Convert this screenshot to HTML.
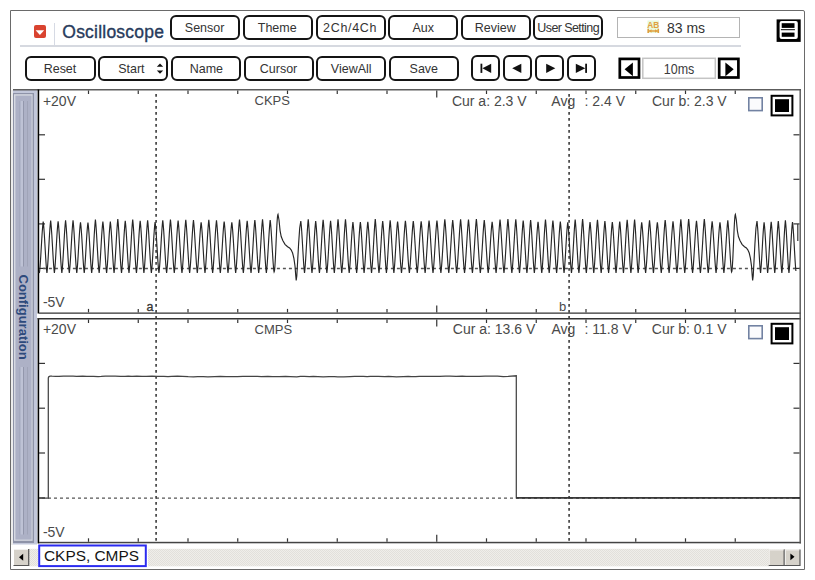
<!DOCTYPE html>
<html><head><meta charset="utf-8">
<style>
html,body{margin:0;padding:0;background:#fff;width:815px;height:580px;overflow:hidden;}
body{position:relative;font-family:"Liberation Sans",sans-serif;color:#222;}
.a{position:absolute;}
.frame{left:10px;top:10px;width:795px;height:560px;box-sizing:border-box;border:1px solid #6a6a6a;border-top-right-radius:2px;}
.btn{position:absolute;box-sizing:border-box;height:25px;border:2px solid #141414;border-radius:6px;background:#fff;font-size:13px;line-height:21px;text-align:center;color:#333;white-space:nowrap;}
.btn span{display:inline-block;transform:scaleX(.96);}
.r1{top:14.6px;height:25.4px;}
.r2{top:55.5px;height:25.5px;}
.nb{position:absolute;box-sizing:border-box;top:55.2px;width:29.2px;height:25.6px;border:2px solid #141414;border-radius:6px;background:#fff;}
.lbl{position:absolute;font-size:14px;color:#333;white-space:nowrap;line-height:14px;}
</style></head><body>
<div class="a frame"></div>

<!-- header -->
<div class="a" style="left:33.6px;top:25px;width:12.2px;height:13px;background:#d9432f;border-radius:2px;"></div>
<svg class="a" style="left:34px;top:25px" width="12" height="13"><path d="M1.6,5.2 L10.2,5.2 L5.9,9.9 Z" fill="#fff"/></svg>
<div class="a" style="left:54px;top:23px;width:1px;height:22px;background:#d6dae4;"></div>
<div class="a" style="left:62.3px;top:21.8px;font-size:17.5px;line-height:20px;color:#283b5c;-webkit-text-stroke:0.35px #283b5c;letter-spacing:0.22px;">Oscilloscope</div>
<div class="a" style="left:19.8px;top:45.1px;width:721px;height:1.8px;background:#d6d9e0;"></div>

<div class="btn r1" style="left:170px;width:70px;"><span>Sensor</span></div>
<div class="btn r1" style="left:242.5px;width:70px;"><span>Theme</span></div>
<div class="btn r1" style="left:315.5px;width:70px;letter-spacing:0.7px;"><span>2Ch/4Ch</span></div>
<div class="btn r1" style="left:388px;width:70px;"><span>Aux</span></div>
<div class="btn r1" style="left:460.5px;width:70px;"><span>Review</span></div>
<div class="btn r1" style="left:533px;width:70px;letter-spacing:-0.6px;"><span>User Setting</span></div>

<div class="a" style="left:617px;top:17px;width:123px;height:21px;box-sizing:border-box;border:1px solid #b4b4b4;"></div>
<svg class="a" style="left:0;top:0" width="815" height="50">
  <rect x="647.5" y="20.5" width="11.5" height="12.5" fill="#e9f8dc"/>
  <text x="647.2" y="27.7" font-size="9" font-family="Liberation Sans" font-weight="bold" fill="#e0a040" textLength="12" lengthAdjust="spacingAndGlyphs">AB</text>
  <path d="M648.2,28.8 V33 M658.3,28.8 V33 M648.2,31 H658.3" stroke="#e0a040" stroke-width="1.6" fill="none"/>
  <path d="M649,31 L651.5,29.3 V32.7 Z M657.5,31 L655,29.3 V32.7 Z" fill="#e0a040"/>
</svg>
<div class="a" style="left:667px;top:20px;font-size:14px;line-height:16px;color:#333;">83 ms</div>

<svg class="a" style="left:0;top:0" width="815" height="50">
  <rect x="776.6" y="19.4" width="24.1" height="22.5" fill="#000"/>
  <rect x="779.6" y="20.9" width="18.2" height="18" rx="2" fill="#fff"/>
  <rect x="781.7" y="23.2" width="12.8" height="4.7" fill="#000"/>
  <rect x="780.9" y="29.2" width="14" height="1" fill="#000"/>
  <rect x="781.7" y="32.6" width="12.8" height="4.2" fill="#000"/>
</svg>

<!-- row 2 -->
<div class="btn r2" style="left:25px;width:70.5px;"><span>Reset</span></div>
<div class="btn r2" style="left:98.4px;width:70px;text-indent:-2.4px;"><span>Start</span></div>
<svg class="a" style="left:155px;top:62px" width="10" height="14"><path d="M1.8,4.8 L5,1.6 L8.2,4.8 Z M1.8,8.6 L5,11.8 L8.2,8.6 Z" fill="#111"/></svg>
<div class="btn r2" style="left:171px;width:70px;"><span>Name</span></div>
<div class="btn r2" style="left:243.5px;width:70px;"><span>Cursor</span></div>
<div class="btn r2" style="left:316px;width:70px;"><span>ViewAll</span></div>
<div class="btn r2" style="left:388.5px;width:70px;"><span>Save</span></div>

<div class="nb" style="left:471.2px;"></div>
<div class="nb" style="left:503px;"></div>
<div class="nb" style="left:535px;"></div>
<div class="nb" style="left:566.8px;"></div>
<svg class="a" style="left:0;top:0" width="815" height="90">
  <rect x="480.5" y="63.7" width="1.8" height="9.2" fill="#111"/>
  <path d="M482.4,68.3 L491.2,63.7 L491.2,72.9 Z" fill="#111"/>
  <path d="M512.2,68.3 L521.3,63.7 L521.3,72.9 Z" fill="#111"/>
  <path d="M555.3,68.3 L546.2,63.7 L546.2,72.9 Z" fill="#111"/>
  <path d="M585.3,68.3 L575.8,63.7 L575.8,72.9 Z" fill="#111"/>
  <rect x="585.2" y="63.7" width="1.8" height="9.2" fill="#111"/>
  <!-- time nav -->
  <rect x="619.8" y="58.9" width="19.2" height="18.6" fill="#fff" stroke="#000" stroke-width="2.7"/>
  <path d="M624.6,69.3 L632.9,62.4 L632.9,76.2 Z" fill="#000"/>
  <rect x="642.8" y="58.3" width="72.5" height="20" fill="#fff" stroke="#c4c4c4" stroke-width="1.5"/>
  <rect x="719.2" y="58.9" width="19.2" height="18.6" fill="#fff" stroke="#000" stroke-width="2.7"/>
  <path d="M733.7,69.3 L725.4,62.4 L725.4,76.2 Z" fill="#000"/>
  <text x="663.8" y="73.5" font-size="14" font-family="Liberation Sans" fill="#3c3c3c" textLength="30.5" lengthAdjust="spacingAndGlyphs">10ms</text>
</svg>

<!-- scope -->
<svg class="a" style="left:0;top:0" width="815" height="580">
  <defs>
    <pattern id="dots" width="2" height="2" patternUnits="userSpaceOnUse">
      <rect width="2" height="2" fill="#efeeea"/>
      <rect width="1" height="1" fill="#e2e0db"/>
      <rect x="1" y="1" width="1" height="1" fill="#e2e0db"/>
    </pattern>
  </defs>
  <!-- sidebar -->
  <rect x="11" y="90" width="2" height="455" fill="#ececec"/>
  <rect x="13" y="90" width="24" height="454.5" fill="#c2c7da"/>
  <rect x="13" y="93" width="21" height="450" fill="#8e93a8"/>
  <rect x="14" y="94.2" width="18.6" height="446.6" fill="#d6d9e2"/>
  <rect x="15.4" y="95.6" width="16.2" height="444" fill="#adb1c6"/>
  <g>
    <rect x="19.5" y="101" width="1" height="165.5" fill="#9ea3b8"/>
    <rect x="20.5" y="101" width="2.5" height="165.5" fill="#bec2d5"/>
    <rect x="23" y="101" width="1" height="165.5" fill="#9397ac"/>
    <rect x="27" y="101" width="1" height="165.5" fill="#a0a4b8"/>
    <rect x="19.5" y="367" width="1" height="167.5" fill="#9ea3b8"/>
    <rect x="20.5" y="367" width="2.5" height="167.5" fill="#bec2d5"/>
    <rect x="23" y="367" width="1" height="167.5" fill="#9397ac"/>
    <rect x="27" y="367" width="1" height="167.5" fill="#a0a4b8"/>
  </g>
  <text transform="translate(19,274.5) rotate(90)" font-size="13" font-weight="bold" font-family="Liberation Sans" fill="#2d4a7c">Configuration</text>

  <!-- panel backgrounds & borders -->
  <rect x="13" y="89" width="788" height="1.5" fill="#5c5c5c"/>
  <rect x="37.6" y="89.5" width="1.6" height="224" fill="#000"/>
  <rect x="37.6" y="318" width="1.6" height="225.5" fill="#000"/>
  <rect x="39" y="312.4" width="762" height="1.5" fill="#555"/>
  <rect x="37.6" y="318" width="763.4" height="1.5" fill="#333"/>
  <rect x="39" y="541.8" width="762" height="1.5" fill="#444"/>
  <rect x="799.5" y="89.5" width="1.4" height="454" fill="#555"/>

  <!-- ticks -->
  <g stroke="#333" stroke-width="1.2">
    <path d="M88.50,90.5 V94.0"/>
    <path d="M88.50,312.4 V308.9"/>
    <path d="M88.50,319.5 V323.0"/>
    <path d="M88.50,541.8 V538.3"/>
    <path d="M138.25,90.5 V94.0"/>
    <path d="M138.25,312.4 V308.9"/>
    <path d="M138.25,319.5 V323.0"/>
    <path d="M138.25,541.8 V538.3"/>
    <path d="M188.00,90.5 V94.0"/>
    <path d="M188.00,312.4 V308.9"/>
    <path d="M188.00,319.5 V323.0"/>
    <path d="M188.00,541.8 V538.3"/>
    <path d="M237.75,90.5 V94.0"/>
    <path d="M237.75,312.4 V308.9"/>
    <path d="M237.75,319.5 V323.0"/>
    <path d="M237.75,541.8 V538.3"/>
    <path d="M287.50,90.5 V94.0"/>
    <path d="M287.50,312.4 V308.9"/>
    <path d="M287.50,319.5 V323.0"/>
    <path d="M287.50,541.8 V538.3"/>
    <path d="M337.25,90.5 V94.0"/>
    <path d="M337.25,312.4 V308.9"/>
    <path d="M337.25,319.5 V323.0"/>
    <path d="M337.25,541.8 V538.3"/>
    <path d="M387.00,90.5 V94.0"/>
    <path d="M387.00,312.4 V308.9"/>
    <path d="M387.00,319.5 V323.0"/>
    <path d="M387.00,541.8 V538.3"/>
    <path d="M436.75,90.5 V97.5"/>
    <path d="M436.75,312.4 V305.4"/>
    <path d="M436.75,319.5 V326.5"/>
    <path d="M436.75,541.8 V534.8"/>
    <path d="M486.50,90.5 V94.0"/>
    <path d="M486.50,312.4 V308.9"/>
    <path d="M486.50,319.5 V323.0"/>
    <path d="M486.50,541.8 V538.3"/>
    <path d="M536.25,90.5 V94.0"/>
    <path d="M536.25,312.4 V308.9"/>
    <path d="M536.25,319.5 V323.0"/>
    <path d="M536.25,541.8 V538.3"/>
    <path d="M586.00,90.5 V94.0"/>
    <path d="M586.00,312.4 V308.9"/>
    <path d="M586.00,319.5 V323.0"/>
    <path d="M586.00,541.8 V538.3"/>
    <path d="M635.75,90.5 V94.0"/>
    <path d="M635.75,312.4 V308.9"/>
    <path d="M635.75,319.5 V323.0"/>
    <path d="M635.75,541.8 V538.3"/>
    <path d="M685.50,90.5 V94.0"/>
    <path d="M685.50,312.4 V308.9"/>
    <path d="M685.50,319.5 V323.0"/>
    <path d="M685.50,541.8 V538.3"/>
    <path d="M735.25,90.5 V94.0"/>
    <path d="M735.25,312.4 V308.9"/>
    <path d="M735.25,319.5 V323.0"/>
    <path d="M735.25,541.8 V538.3"/>
    <path d="M39,134.8 H45"/>
    <path d="M799.5,134.8 H793.5"/>
    <path d="M39,179.3 H45"/>
    <path d="M799.5,179.3 H793.5"/>
    <path d="M39,223.9 H45"/>
    <path d="M799.5,223.9 H793.5"/>
    <path d="M39,268.4 H45"/>
    <path d="M799.5,268.4 H793.5"/>
    <path d="M39,363.4 H45"/>
    <path d="M799.5,363.4 H793.5"/>
    <path d="M39,408.2 H45"/>
    <path d="M799.5,408.2 H793.5"/>
    <path d="M39,453.0 H45"/>
    <path d="M799.5,453.0 H793.5"/>
    <path d="M39,497.9 H45"/>
    <path d="M799.5,497.9 H793.5"/>
  </g>

  <path d="M797.8,223.9 V241" stroke="#333" stroke-width="1.2"/>
  <!-- dashed refs -->
  <path d="M42.9,268.5 H800" stroke="#555" stroke-width="1.3" stroke-dasharray="3,3"/>
  <path d="M42,498.1 H800" stroke="#555" stroke-width="1.3" stroke-dasharray="3,3"/>
  <!-- cursors -->
  <path d="M156.1,94 V543" stroke="#3a3a3a" stroke-width="1.6" stroke-dasharray="2.8,3.2"/>
  <path d="M569.1,94 V543" stroke="#3a3a3a" stroke-width="1.6" stroke-dasharray="2.8,3.2"/>

  <!-- waves -->
  <path d="M39.00,271.59 L39.40,273.00 L39.64,270.99 L39.88,268.53 L40.11,265.67 L40.35,262.42 L40.59,258.86 L40.83,255.05 L41.06,251.07 L41.30,247.00 L41.54,242.93 L41.78,238.99 L42.01,235.28 L42.25,231.83 L42.49,228.69 L42.73,225.92 L42.96,223.58 L43.20,221.67 L43.43,223.58 L43.67,225.92 L43.90,228.69 L44.13,231.83 L44.37,235.28 L44.60,238.99 L44.83,242.93 L45.07,247.00 L45.30,251.07 L45.53,255.05 L45.76,258.86 L46.00,262.42 L46.23,265.67 L46.46,268.53 L46.70,270.99 L46.93,273.00 L47.16,270.99 L47.40,268.53 L47.63,265.67 L47.86,262.42 L48.10,258.86 L48.33,255.05 L48.56,251.07 L48.80,247.00 L49.03,242.93 L49.26,238.92 L49.49,235.05 L49.73,231.43 L49.96,228.12 L50.19,225.19 L50.43,222.67 L50.66,220.60 L50.89,222.67 L51.13,225.19 L51.36,228.12 L51.59,231.43 L51.83,235.05 L52.06,238.92 L52.29,242.93 L52.53,247.00 L52.76,251.07 L52.99,255.05 L53.22,258.86 L53.46,262.42 L53.69,265.67 L53.92,268.53 L54.16,270.99 L54.39,273.00 L54.62,270.99 L54.86,268.53 L55.09,265.67 L55.32,262.42 L55.56,258.86 L55.79,255.05 L56.02,251.07 L56.26,247.00 L56.49,242.93 L56.72,238.96 L56.95,235.18 L57.19,231.65 L57.42,228.44 L57.65,225.61 L57.89,223.19 L58.12,221.21 L58.35,223.19 L58.59,225.61 L58.82,228.44 L59.05,231.65 L59.29,235.18 L59.52,238.96 L59.75,242.93 L59.98,247.00 L60.22,251.07 L60.45,255.05 L60.68,258.86 L60.92,262.42 L61.15,265.67 L61.38,268.53 L61.62,270.99 L61.85,273.00 L62.08,270.99 L62.32,268.53 L62.55,265.67 L62.78,262.42 L63.02,258.86 L63.25,255.05 L63.48,251.07 L63.72,247.00 L63.95,242.93 L64.18,238.91 L64.41,235.00 L64.65,231.35 L64.88,228.01 L65.11,225.04 L65.35,222.49 L65.58,220.39 L65.81,222.49 L66.05,225.04 L66.28,228.01 L66.51,231.35 L66.75,235.00 L66.98,238.91 L67.21,242.93 L67.44,247.00 L67.68,251.07 L67.91,255.05 L68.14,258.86 L68.38,262.42 L68.61,265.67 L68.84,268.53 L69.08,270.99 L69.31,273.00 L69.54,270.99 L69.78,268.53 L70.01,265.67 L70.24,262.42 L70.48,258.86 L70.71,255.05 L70.94,251.07 L71.17,247.00 L71.41,242.93 L71.64,238.90 L71.87,234.99 L72.11,231.32 L72.34,227.97 L72.57,224.99 L72.81,222.43 L73.04,220.31 L73.27,222.43 L73.51,224.99 L73.74,227.97 L73.97,231.32 L74.21,234.99 L74.44,238.90 L74.67,242.93 L74.91,247.00 L75.14,251.07 L75.37,255.05 L75.60,258.86 L75.84,262.42 L76.07,265.67 L76.30,268.53 L76.54,270.99 L76.77,273.00 L77.00,270.99 L77.24,268.53 L77.47,265.67 L77.70,262.42 L77.94,258.86 L78.17,255.05 L78.40,251.07 L78.63,247.00 L78.87,242.93 L79.10,239.03 L79.33,235.42 L79.57,232.05 L79.80,229.01 L80.03,226.34 L80.27,224.08 L80.50,222.27 L80.73,224.08 L80.97,226.34 L81.20,229.01 L81.43,232.05 L81.67,235.42 L81.90,239.03 L82.13,242.93 L82.37,247.00 L82.60,251.07 L82.83,255.05 L83.06,258.86 L83.30,262.42 L83.53,265.67 L83.76,268.53 L84.00,270.99 L84.23,273.00 L84.46,270.99 L84.70,268.53 L84.93,265.67 L85.16,262.42 L85.40,258.86 L85.63,255.05 L85.86,251.07 L86.09,247.00 L86.33,242.93 L86.56,239.04 L86.79,235.46 L87.03,232.12 L87.26,229.11 L87.49,226.47 L87.73,224.24 L87.96,222.45 L88.19,224.24 L88.43,226.47 L88.66,229.11 L88.89,232.12 L89.13,235.46 L89.36,239.04 L89.59,242.93 L89.83,247.00 L90.06,251.07 L90.29,255.05 L90.52,258.86 L90.76,262.42 L90.99,265.67 L91.22,268.53 L91.46,270.99 L91.69,273.00 L91.92,270.99 L92.16,268.53 L92.39,265.67 L92.62,262.42 L92.86,258.86 L93.09,255.05 L93.32,251.07 L93.56,247.00 L93.79,242.93 L94.02,238.86 L94.25,234.82 L94.49,231.04 L94.72,227.57 L94.95,224.48 L95.19,221.80 L95.42,219.57 L95.65,221.80 L95.89,224.48 L96.12,227.57 L96.35,231.04 L96.59,234.82 L96.82,238.86 L97.05,242.93 L97.28,247.00 L97.52,251.07 L97.75,255.05 L97.98,258.86 L98.22,262.42 L98.45,265.67 L98.68,268.53 L98.92,270.99 L99.15,273.00 L99.38,270.99 L99.62,268.53 L99.85,265.67 L100.08,262.42 L100.32,258.86 L100.55,255.05 L100.78,251.07 L101.02,247.00 L101.25,242.93 L101.48,238.98 L101.71,235.27 L101.95,231.80 L102.18,228.65 L102.41,225.87 L102.65,223.51 L102.88,221.59 L103.11,223.51 L103.35,225.87 L103.58,228.65 L103.81,231.80 L104.05,235.27 L104.28,238.98 L104.51,242.93 L104.74,247.00 L104.98,251.07 L105.21,255.05 L105.44,258.86 L105.68,262.42 L105.91,265.67 L106.14,268.53 L106.38,270.99 L106.61,273.00 L106.84,270.99 L107.08,268.53 L107.31,265.67 L107.54,262.42 L107.78,258.86 L108.01,255.05 L108.24,251.07 L108.47,247.00 L108.71,242.93 L108.94,238.99 L109.17,235.29 L109.41,231.83 L109.64,228.70 L109.87,225.93 L110.11,223.59 L110.34,221.68 L110.57,223.59 L110.81,225.93 L111.04,228.70 L111.27,231.83 L111.51,235.29 L111.74,238.99 L111.97,242.93 L112.20,247.00 L112.44,251.07 L112.67,255.05 L112.90,258.86 L113.14,262.42 L113.37,265.67 L113.60,268.53 L113.84,270.99 L114.07,273.00 L114.30,270.99 L114.54,268.53 L114.77,265.67 L115.00,262.42 L115.24,258.86 L115.47,255.05 L115.70,251.07 L115.94,247.00 L116.17,242.93 L116.40,238.82 L116.63,234.70 L116.87,230.83 L117.10,227.28 L117.33,224.10 L117.57,221.34 L117.80,219.02 L118.03,221.34 L118.27,224.10 L118.50,227.28 L118.73,230.83 L118.97,234.70 L119.20,238.82 L119.43,242.93 L119.66,247.00 L119.90,251.07 L120.13,255.05 L120.36,258.86 L120.60,262.42 L120.83,265.67 L121.06,268.53 L121.30,270.99 L121.53,273.00 L121.76,270.99 L122.00,268.53 L122.23,265.67 L122.46,262.42 L122.70,258.86 L122.93,255.05 L123.16,251.07 L123.39,247.00 L123.63,242.93 L123.86,238.94 L124.09,235.11 L124.33,231.52 L124.56,228.26 L124.79,225.37 L125.03,222.89 L125.26,220.85 L125.49,222.89 L125.73,225.37 L125.96,228.26 L126.19,231.52 L126.43,235.11 L126.66,238.94 L126.89,242.93 L127.12,247.00 L127.36,251.07 L127.59,255.05 L127.82,258.86 L128.06,262.42 L128.29,265.67 L128.52,268.53 L128.76,270.99 L128.99,273.00 L129.22,270.99 L129.46,268.53 L129.69,265.67 L129.92,262.42 L130.16,258.86 L130.39,255.05 L130.62,251.07 L130.86,247.00 L131.09,242.93 L131.32,238.86 L131.55,234.83 L131.79,231.04 L132.02,227.58 L132.25,224.48 L132.49,221.81 L132.72,219.57 L132.95,221.81 L133.19,224.48 L133.42,227.58 L133.65,231.04 L133.89,234.83 L134.12,238.86 L134.35,242.93 L134.58,247.00 L134.82,251.07 L135.05,255.05 L135.28,258.86 L135.52,262.42 L135.75,265.67 L135.98,268.53 L136.22,270.99 L136.45,273.00 L136.68,270.99 L136.92,268.53 L137.15,265.67 L137.38,262.42 L137.62,258.86 L137.85,255.05 L138.08,251.07 L138.31,247.00 L138.55,242.93 L138.78,238.94 L139.01,235.10 L139.25,231.51 L139.48,228.25 L139.71,225.35 L139.95,222.87 L140.18,220.83 L140.41,222.87 L140.65,225.35 L140.88,228.25 L141.11,231.51 L141.35,235.10 L141.58,238.94 L141.81,242.93 L142.05,247.00 L142.28,251.07 L142.51,255.05 L142.74,258.86 L142.98,262.42 L143.21,265.67 L143.44,268.53 L143.68,270.99 L143.91,273.00 L144.14,270.99 L144.38,268.53 L144.61,265.67 L144.84,262.42 L145.08,258.86 L145.31,255.05 L145.54,251.07 L145.77,247.00 L146.01,242.93 L146.24,238.90 L146.47,234.98 L146.71,231.30 L146.94,227.94 L147.17,224.96 L147.41,222.39 L147.64,220.26 L147.87,222.39 L148.11,224.96 L148.34,227.94 L148.57,231.30 L148.81,234.98 L149.04,238.90 L149.27,242.93 L149.50,247.00 L149.74,251.07 L149.97,255.05 L150.20,258.86 L150.44,262.42 L150.67,265.67 L150.90,268.53 L151.14,270.99 L151.37,273.00 L151.60,270.99 L151.84,268.53 L152.07,265.67 L152.30,262.42 L152.54,258.86 L152.77,255.05 L153.00,251.07 L153.24,247.00 L153.47,242.93 L153.70,239.01 L153.93,235.35 L154.17,231.94 L154.40,228.85 L154.63,226.13 L154.87,223.83 L155.10,221.97 L155.34,223.83 L155.58,226.13 L155.82,228.85 L156.06,231.94 L156.30,235.35 L156.54,239.01 L156.78,242.93 L157.02,247.00 L157.26,251.07 L157.50,255.05 L157.74,258.86 L157.98,262.42 L158.22,265.67 L158.46,268.53 L158.70,270.99 L158.94,273.00 L159.18,270.99 L159.42,268.53 L159.66,265.67 L159.90,262.42 L160.14,258.86 L160.38,255.05 L160.62,251.07 L160.86,247.00 L161.09,242.93 L161.33,238.90 L161.57,234.98 L161.81,231.31 L162.05,227.95 L162.29,224.97 L162.53,222.40 L162.77,220.28 L163.01,222.40 L163.25,224.97 L163.49,227.95 L163.73,231.31 L163.97,234.98 L164.21,238.90 L164.45,242.93 L164.69,247.00 L164.93,251.07 L165.17,255.05 L165.41,258.86 L165.65,262.42 L165.89,265.67 L166.13,268.53 L166.37,270.99 L166.61,273.00 L166.85,270.99 L167.09,268.53 L167.33,265.67 L167.57,262.42 L167.81,258.86 L168.05,255.05 L168.29,251.07 L168.53,247.00 L168.77,242.93 L169.01,238.85 L169.25,234.80 L169.49,231.00 L169.73,227.52 L169.97,224.41 L170.21,221.71 L170.45,219.46 L170.69,221.71 L170.93,224.41 L171.17,227.52 L171.41,231.00 L171.65,234.80 L171.89,238.85 L172.13,242.93 L172.37,247.00 L172.60,251.07 L172.84,255.05 L173.08,258.86 L173.32,262.42 L173.56,265.67 L173.80,268.53 L174.04,270.99 L174.28,273.00 L174.52,270.99 L174.76,268.53 L175.00,265.67 L175.24,262.42 L175.48,258.86 L175.72,255.05 L175.96,251.07 L176.20,247.00 L176.44,242.93 L176.68,238.93 L176.92,235.06 L177.16,231.45 L177.40,228.16 L177.64,225.24 L177.88,222.73 L178.12,220.67 L178.36,222.73 L178.60,225.24 L178.84,228.16 L179.08,231.45 L179.32,235.06 L179.56,238.93 L179.80,242.93 L180.04,247.00 L180.28,251.07 L180.52,255.05 L180.76,258.86 L181.00,262.42 L181.24,265.67 L181.48,268.53 L181.72,270.99 L181.96,273.00 L182.20,270.99 L182.44,268.53 L182.68,265.67 L182.92,262.42 L183.16,258.86 L183.40,255.05 L183.64,251.07 L183.88,247.00 L184.11,242.93 L184.35,238.88 L184.59,234.90 L184.83,231.17 L185.07,227.75 L185.31,224.71 L185.55,222.09 L185.79,219.91 L186.03,222.09 L186.27,224.71 L186.51,227.75 L186.75,231.17 L186.99,234.90 L187.23,238.88 L187.47,242.93 L187.71,247.00 L187.95,251.07 L188.19,255.05 L188.43,258.86 L188.67,262.42 L188.91,265.67 L189.15,268.53 L189.39,270.99 L189.63,273.00 L189.87,270.99 L190.11,268.53 L190.35,265.67 L190.59,262.42 L190.83,258.86 L191.07,255.05 L191.31,251.07 L191.55,247.00 L191.79,242.93 L192.03,238.89 L192.27,234.95 L192.51,231.26 L192.75,227.88 L192.99,224.88 L193.23,222.30 L193.47,220.15 L193.71,222.30 L193.95,224.88 L194.19,227.88 L194.43,231.26 L194.67,234.95 L194.91,238.89 L195.15,242.93 L195.38,247.00 L195.62,251.07 L195.86,255.05 L196.10,258.86 L196.34,262.42 L196.58,265.67 L196.82,268.53 L197.06,270.99 L197.30,273.00 L197.54,270.99 L197.78,268.53 L198.02,265.67 L198.26,262.42 L198.50,258.86 L198.74,255.05 L198.98,251.07 L199.22,247.00 L199.46,242.93 L199.70,239.03 L199.94,235.42 L200.18,232.06 L200.42,229.01 L200.66,226.34 L200.90,224.09 L201.14,222.28 L201.38,224.09 L201.62,226.34 L201.86,229.01 L202.10,232.06 L202.34,235.42 L202.58,239.03 L202.82,242.93 L203.06,247.00 L203.30,251.07 L203.54,255.05 L203.78,258.86 L204.02,262.42 L204.26,265.67 L204.50,268.53 L204.74,270.99 L204.98,273.00 L205.22,270.99 L205.46,268.53 L205.70,265.67 L205.94,262.42 L206.18,258.86 L206.42,255.05 L206.66,251.07 L206.89,247.00 L207.13,242.93 L207.37,238.88 L207.61,234.88 L207.85,231.14 L208.09,227.72 L208.33,224.67 L208.57,222.04 L208.81,219.85 L209.05,222.04 L209.29,224.67 L209.53,227.72 L209.77,231.14 L210.01,234.88 L210.25,238.88 L210.49,242.93 L210.73,247.00 L210.97,251.07 L211.21,255.05 L211.45,258.86 L211.69,262.42 L211.93,265.67 L212.17,268.53 L212.41,270.99 L212.65,273.00 L212.89,270.99 L213.13,268.53 L213.37,265.67 L213.61,262.42 L213.85,258.86 L214.09,255.05 L214.33,251.07 L214.57,247.00 L214.81,242.93 L215.05,238.91 L215.29,235.01 L215.53,231.36 L215.77,228.03 L216.01,225.07 L216.25,222.53 L216.49,220.43 L216.73,222.53 L216.97,225.07 L217.21,228.03 L217.45,231.36 L217.69,235.01 L217.93,238.91 L218.17,242.93 L218.40,247.00 L218.64,251.07 L218.88,255.05 L219.12,258.86 L219.36,262.42 L219.60,265.67 L219.84,268.53 L220.08,270.99 L220.32,273.00 L220.56,270.99 L220.80,268.53 L221.04,265.67 L221.28,262.42 L221.52,258.86 L221.76,255.05 L222.00,251.07 L222.24,247.00 L222.48,242.93 L222.72,238.98 L222.96,235.23 L223.20,231.74 L223.44,228.57 L223.68,225.77 L223.92,223.39 L224.16,221.45 L224.40,223.39 L224.64,225.77 L224.88,228.57 L225.12,231.74 L225.36,235.23 L225.60,238.98 L225.84,242.93 L226.08,247.00 L226.32,251.07 L226.56,255.05 L226.80,258.86 L227.04,262.42 L227.28,265.67 L227.52,268.53 L227.76,270.99 L228.00,273.00 L228.24,270.99 L228.48,268.53 L228.72,265.67 L228.96,262.42 L229.20,258.86 L229.44,255.05 L229.68,251.07 L229.91,247.00 L230.15,242.93 L230.39,239.03 L230.63,235.44 L230.87,232.10 L231.11,229.07 L231.35,226.42 L231.59,224.19 L231.83,222.39 L232.07,224.19 L232.31,226.42 L232.55,229.07 L232.79,232.10 L233.03,235.44 L233.27,239.03 L233.51,242.93 L233.75,247.00 L233.99,251.07 L234.23,255.05 L234.47,258.86 L234.71,262.42 L234.95,265.67 L235.19,268.53 L235.43,270.99 L235.67,273.00 L235.91,270.99 L236.15,268.53 L236.39,265.67 L236.63,262.42 L236.87,258.86 L237.11,255.05 L237.35,251.07 L237.59,247.00 L237.83,242.93 L238.07,238.85 L238.31,234.80 L238.55,231.00 L238.79,227.52 L239.03,224.41 L239.27,221.72 L239.51,219.47 L239.75,221.72 L239.99,224.41 L240.23,227.52 L240.47,231.00 L240.71,234.80 L240.95,238.85 L241.19,242.93 L241.43,247.00 L241.66,251.07 L241.90,255.05 L242.14,258.86 L242.38,262.42 L242.62,265.67 L242.86,268.53 L243.10,270.99 L243.34,273.00 L243.58,270.99 L243.82,268.53 L244.06,265.67 L244.30,262.42 L244.54,258.86 L244.78,255.05 L245.02,251.07 L245.26,247.00 L245.50,242.93 L245.74,238.94 L245.98,235.10 L246.22,231.52 L246.46,228.25 L246.70,225.36 L246.94,222.88 L247.18,220.85 L247.42,222.88 L247.66,225.36 L247.90,228.25 L248.14,231.52 L248.38,235.10 L248.62,238.94 L248.86,242.93 L249.10,247.00 L249.34,251.07 L249.58,255.05 L249.82,258.86 L250.06,262.42 L250.30,265.67 L250.54,268.53 L250.78,270.99 L251.02,273.00 L251.26,270.99 L251.50,268.53 L251.74,265.67 L251.98,262.42 L252.22,258.86 L252.46,255.05 L252.70,251.07 L252.94,247.00 L253.17,242.93 L253.41,238.88 L253.65,234.92 L253.89,231.20 L254.13,227.79 L254.37,224.77 L254.61,222.16 L254.85,219.98 L255.09,222.16 L255.33,224.77 L255.57,227.79 L255.81,231.20 L256.05,234.92 L256.29,238.88 L256.53,242.93 L256.77,247.00 L257.01,251.07 L257.25,255.05 L257.49,258.86 L257.73,262.42 L257.97,265.67 L258.21,268.53 L258.45,270.99 L258.69,273.00 L258.93,270.99 L259.17,268.53 L259.41,265.67 L259.65,262.42 L259.89,258.86 L260.13,255.05 L260.37,251.07 L260.61,247.00 L260.85,242.93 L261.09,238.85 L261.33,234.79 L261.57,230.99 L261.81,227.50 L262.05,224.38 L262.29,221.68 L262.53,219.42 L262.77,221.68 L263.01,224.38 L263.25,227.50 L263.49,230.99 L263.73,234.79 L263.97,238.85 L264.21,242.93 L264.44,247.00 L264.68,251.07 L264.92,255.05 L265.16,258.86 L265.40,262.42 L265.64,265.67 L265.88,268.53 L266.12,270.99 L266.36,273.00 L266.60,270.99 L266.84,268.53 L267.08,265.67 L267.32,262.42 L267.56,258.86 L267.80,255.05 L268.04,251.07 L268.28,247.00 L268.52,242.93 L268.76,238.89 L269.00,234.92 L269.24,231.20 L269.48,227.80 L269.72,224.78 L269.96,222.17 L270.20,220.00 L270.44,222.17 L270.69,224.78 L270.93,227.80 L271.18,231.20 L271.42,234.92 L271.66,238.89 L271.91,242.93 L272.15,247.00 L272.39,251.07 L272.64,255.05 L272.88,258.86 L273.12,262.42 L273.37,265.67 L273.61,268.53 L273.86,270.99 L274.10,272.00 L274.34,271.45 L274.59,269.81 L274.83,267.15 L275.08,263.56 L275.32,259.20 L275.56,254.22 L275.81,248.82 L276.05,243.20 L276.29,237.58 L276.54,232.18 L276.78,227.20 L277.02,222.84 L277.27,219.25 L277.51,216.59 L277.76,214.95 L278.00,214.40 L279.00,220.00 L280.10,230.80 L281.20,236.50 L282.80,240.50 L285.00,244.30 L287.60,246.70 L289.60,248.00 L291.10,249.80 L292.60,253.00 L293.90,258.40 L295.00,266.00 L295.70,275.00 L296.20,280.50 L296.80,276.00 L297.60,262.00 L298.60,244.00 L299.70,228.00 L300.80,221.00 L300.80,221.00 L301.03,223.01 L301.27,225.47 L301.50,228.33 L301.73,231.58 L301.96,235.14 L302.20,238.95 L302.43,242.93 L302.66,247.00 L302.89,251.07 L303.13,255.05 L303.36,258.86 L303.59,262.42 L303.82,265.67 L304.06,268.53 L304.29,270.99 L304.52,273.00 L304.76,270.99 L304.99,268.53 L305.22,265.67 L305.45,262.42 L305.69,258.86 L305.92,255.05 L306.15,251.07 L306.38,247.00 L306.62,242.93 L306.85,238.84 L307.08,234.76 L307.32,230.93 L307.55,227.42 L307.78,224.28 L308.01,221.56 L308.25,219.28 L308.48,221.56 L308.71,224.28 L308.94,227.42 L309.18,230.93 L309.41,234.76 L309.64,238.84 L309.88,242.93 L310.11,247.00 L310.34,251.07 L310.57,255.05 L310.81,258.86 L311.04,262.42 L311.27,265.67 L311.50,268.53 L311.74,270.99 L311.97,273.00 L312.20,270.99 L312.43,268.53 L312.67,265.67 L312.90,262.42 L313.13,258.86 L313.37,255.05 L313.60,251.07 L313.83,247.00 L314.06,242.93 L314.30,238.95 L314.53,235.16 L314.76,231.62 L314.99,228.40 L315.23,225.55 L315.46,223.11 L315.69,221.12 L315.93,223.11 L316.16,225.55 L316.39,228.40 L316.62,231.62 L316.86,235.16 L317.09,238.95 L317.32,242.93 L317.55,247.00 L317.79,251.07 L318.02,255.05 L318.25,258.86 L318.48,262.42 L318.72,265.67 L318.95,268.53 L319.18,270.99 L319.42,273.00 L319.65,270.99 L319.88,268.53 L320.11,265.67 L320.35,262.42 L320.58,258.86 L320.81,255.05 L321.04,251.07 L321.28,247.00 L321.51,242.93 L321.74,238.87 L321.98,234.85 L322.21,231.09 L322.44,227.64 L322.67,224.57 L322.91,221.91 L323.14,219.70 L323.37,221.91 L323.60,224.57 L323.84,227.64 L324.07,231.09 L324.30,234.85 L324.53,238.87 L324.77,242.93 L325.00,247.00 L325.23,251.07 L325.47,255.05 L325.70,258.86 L325.93,262.42 L326.16,265.67 L326.40,268.53 L326.63,270.99 L326.86,273.00 L327.09,270.99 L327.33,268.53 L327.56,265.67 L327.79,262.42 L328.03,258.86 L328.26,255.05 L328.49,251.07 L328.72,247.00 L328.96,242.93 L329.19,238.94 L329.42,235.13 L329.65,231.56 L329.89,228.30 L330.12,225.43 L330.35,222.96 L330.58,220.94 L330.82,222.96 L331.05,225.43 L331.28,228.30 L331.52,231.56 L331.75,235.13 L331.98,238.94 L332.21,242.93 L332.45,247.00 L332.68,251.07 L332.91,255.05 L333.14,258.86 L333.38,262.42 L333.61,265.67 L333.84,268.53 L334.07,270.99 L334.31,273.00 L334.54,270.99 L334.77,268.53 L335.01,265.67 L335.24,262.42 L335.47,258.86 L335.70,255.05 L335.94,251.07 L336.17,247.00 L336.40,242.93 L336.63,238.84 L336.87,234.75 L337.10,230.91 L337.33,227.39 L337.57,224.25 L337.80,221.52 L338.03,219.23 L338.26,221.52 L338.50,224.25 L338.73,227.39 L338.96,230.91 L339.19,234.75 L339.43,238.84 L339.66,242.93 L339.89,247.00 L340.12,251.07 L340.36,255.05 L340.59,258.86 L340.82,262.42 L341.06,265.67 L341.29,268.53 L341.52,270.99 L341.75,273.00 L341.99,270.99 L342.22,268.53 L342.45,265.67 L342.68,262.42 L342.92,258.86 L343.15,255.05 L343.38,251.07 L343.62,247.00 L343.85,242.93 L344.08,238.85 L344.31,234.79 L344.55,230.99 L344.78,227.50 L345.01,224.38 L345.24,221.68 L345.48,219.42 L345.71,221.68 L345.94,224.38 L346.18,227.50 L346.41,230.99 L346.64,234.79 L346.87,238.85 L347.11,242.93 L347.34,247.00 L347.57,251.07 L347.80,255.05 L348.04,258.86 L348.27,262.42 L348.50,265.67 L348.73,268.53 L348.97,270.99 L349.20,273.00 L349.43,270.99 L349.67,268.53 L349.90,265.67 L350.13,262.42 L350.36,258.86 L350.60,255.05 L350.83,251.07 L351.06,247.00 L351.29,242.93 L351.53,239.02 L351.76,235.39 L351.99,232.01 L352.23,228.95 L352.46,226.26 L352.69,223.99 L352.92,222.16 L353.16,223.99 L353.39,226.26 L353.62,228.95 L353.85,232.01 L354.09,235.39 L354.32,239.02 L354.55,242.93 L354.78,247.00 L355.02,251.07 L355.25,255.05 L355.48,258.86 L355.72,262.42 L355.95,265.67 L356.18,268.53 L356.41,270.99 L356.65,273.00 L356.88,270.99 L357.11,268.53 L357.34,265.67 L357.58,262.42 L357.81,258.86 L358.04,255.05 L358.28,251.07 L358.51,247.00 L358.74,242.93 L358.97,239.01 L359.21,235.36 L359.44,231.96 L359.67,228.88 L359.90,226.17 L360.14,223.88 L360.37,222.02 L360.60,223.88 L360.83,226.17 L361.07,228.88 L361.30,231.96 L361.53,235.36 L361.77,239.01 L362.00,242.93 L362.23,247.00 L362.46,251.07 L362.70,255.05 L362.93,258.86 L363.16,262.42 L363.39,265.67 L363.63,268.53 L363.86,270.99 L364.09,273.00 L364.33,270.99 L364.56,268.53 L364.79,265.67 L365.02,262.42 L365.26,258.86 L365.49,255.05 L365.72,251.07 L365.95,247.00 L366.19,242.93 L366.42,238.99 L366.65,235.30 L366.88,231.85 L367.12,228.73 L367.35,225.97 L367.58,223.64 L367.82,221.74 L368.05,223.64 L368.28,225.97 L368.51,228.73 L368.75,231.85 L368.98,235.30 L369.21,238.99 L369.44,242.93 L369.68,247.00 L369.91,251.07 L370.14,255.05 L370.38,258.86 L370.61,262.42 L370.84,265.67 L371.07,268.53 L371.31,270.99 L371.54,273.00 L371.77,270.99 L372.00,268.53 L372.24,265.67 L372.47,262.42 L372.70,258.86 L372.93,255.05 L373.17,251.07 L373.40,247.00 L373.63,242.93 L373.87,238.83 L374.10,234.73 L374.33,230.87 L374.56,227.34 L374.80,224.17 L375.03,221.43 L375.26,219.12 L375.49,221.43 L375.73,224.17 L375.96,227.34 L376.19,230.87 L376.43,234.73 L376.66,238.83 L376.89,242.93 L377.12,247.00 L377.36,251.07 L377.59,255.05 L377.82,258.86 L378.05,262.42 L378.29,265.67 L378.52,268.53 L378.75,270.99 L378.98,273.00 L379.22,270.99 L379.45,268.53 L379.68,265.67 L379.92,262.42 L380.15,258.86 L380.38,255.05 L380.61,251.07 L380.85,247.00 L381.08,242.93 L381.31,238.95 L381.54,235.13 L381.78,231.57 L382.01,228.32 L382.24,225.45 L382.48,222.99 L382.71,220.97 L382.94,222.99 L383.17,225.45 L383.41,228.32 L383.64,231.57 L383.87,235.13 L384.10,238.95 L384.34,242.93 L384.57,247.00 L384.80,251.07 L385.03,255.05 L385.27,258.86 L385.50,262.42 L385.73,265.67 L385.97,268.53 L386.20,270.99 L386.43,273.00 L386.66,270.99 L386.90,268.53 L387.13,265.67 L387.36,262.42 L387.59,258.86 L387.83,255.05 L388.06,251.07 L388.29,247.00 L388.53,242.93 L388.76,238.90 L388.99,234.99 L389.22,231.32 L389.46,227.97 L389.69,224.99 L389.92,222.43 L390.15,220.31 L390.39,222.43 L390.62,224.99 L390.85,227.97 L391.08,231.32 L391.32,234.99 L391.55,238.90 L391.78,242.93 L392.02,247.00 L392.25,251.07 L392.48,255.05 L392.71,258.86 L392.95,262.42 L393.18,265.67 L393.41,268.53 L393.64,270.99 L393.88,273.00 L394.11,270.99 L394.34,268.53 L394.58,265.67 L394.81,262.42 L395.04,258.86 L395.27,255.05 L395.51,251.07 L395.74,247.00 L395.97,242.93 L396.20,238.98 L396.44,235.23 L396.67,231.74 L396.90,228.57 L397.13,225.77 L397.37,223.39 L397.60,221.45 L397.84,223.39 L398.09,225.77 L398.33,228.57 L398.58,231.74 L398.82,235.23 L399.06,238.98 L399.31,242.93 L399.55,247.00 L399.79,251.07 L400.04,255.05 L400.28,258.86 L400.52,262.42 L400.77,265.67 L401.01,268.53 L401.26,270.99 L401.50,273.00 L401.74,270.99 L401.99,268.53 L402.23,265.67 L402.48,262.42 L402.72,258.86 L402.96,255.05 L403.21,251.07 L403.45,247.00 L403.69,242.93 L403.94,238.93 L404.18,235.08 L404.42,231.47 L404.67,228.19 L404.91,225.28 L405.16,222.78 L405.40,220.72 L405.65,222.78 L405.89,225.28 L406.14,228.19 L406.39,231.47 L406.63,235.08 L406.88,238.93 L407.12,242.93 L407.37,247.00 L407.62,251.07 L407.86,255.05 L408.11,258.86 L408.36,262.42 L408.60,265.67 L408.85,268.53 L409.10,270.99 L409.34,273.00 L409.59,270.99 L409.84,268.53 L410.08,265.67 L410.33,262.42 L410.57,258.86 L410.82,255.05 L411.07,251.07 L411.31,247.00 L411.56,242.93 L411.81,238.96 L412.05,235.17 L412.30,231.63 L412.55,228.41 L412.79,225.57 L413.04,223.14 L413.29,221.15 L413.53,223.14 L413.78,225.57 L414.02,228.41 L414.27,231.63 L414.52,235.17 L414.76,238.96 L415.01,242.93 L415.26,247.00 L415.50,251.07 L415.75,255.05 L416.00,258.86 L416.24,262.42 L416.49,265.67 L416.74,268.53 L416.98,270.99 L417.23,273.00 L417.47,270.99 L417.72,268.53 L417.97,265.67 L418.21,262.42 L418.46,258.86 L418.71,255.05 L418.95,251.07 L419.20,247.00 L419.45,242.93 L419.69,238.96 L419.94,235.20 L420.19,231.68 L420.43,228.48 L420.68,225.65 L420.92,223.24 L421.17,221.27 L421.42,223.24 L421.66,225.65 L421.91,228.48 L422.16,231.68 L422.40,235.20 L422.65,238.96 L422.90,242.93 L423.14,247.00 L423.39,251.07 L423.64,255.05 L423.88,258.86 L424.13,262.42 L424.37,265.67 L424.62,268.53 L424.87,270.99 L425.11,273.00 L425.36,270.99 L425.61,268.53 L425.85,265.67 L426.10,262.42 L426.35,258.86 L426.59,255.05 L426.84,251.07 L427.09,247.00 L427.33,242.93 L427.58,238.91 L427.82,235.02 L428.07,231.37 L428.32,228.04 L428.56,225.09 L428.81,222.55 L429.06,220.45 L429.30,222.55 L429.55,225.09 L429.80,228.04 L430.04,231.37 L430.29,235.02 L430.54,238.91 L430.78,242.93 L431.03,247.00 L431.27,251.07 L431.52,255.05 L431.77,258.86 L432.01,262.42 L432.26,265.67 L432.51,268.53 L432.75,270.99 L433.00,273.00 L433.25,270.99 L433.49,268.53 L433.74,265.67 L433.99,262.42 L434.23,258.86 L434.48,255.05 L434.72,251.07 L434.97,247.00 L435.22,242.93 L435.46,238.91 L435.71,235.02 L435.96,231.37 L436.20,228.04 L436.45,225.09 L436.70,222.55 L436.94,220.46 L437.19,222.55 L437.44,225.09 L437.68,228.04 L437.93,231.37 L438.17,235.02 L438.42,238.91 L438.67,242.93 L438.91,247.00 L439.16,251.07 L439.41,255.05 L439.65,258.86 L439.90,262.42 L440.15,265.67 L440.39,268.53 L440.64,270.99 L440.89,273.00 L441.13,270.99 L441.38,268.53 L441.62,265.67 L441.87,262.42 L442.12,258.86 L442.36,255.05 L442.61,251.07 L442.86,247.00 L443.10,242.93 L443.35,238.84 L443.60,234.77 L443.84,230.95 L444.09,227.45 L444.34,224.32 L444.58,221.61 L444.83,219.34 L445.07,221.61 L445.32,224.32 L445.57,227.45 L445.81,230.95 L446.06,234.77 L446.31,238.84 L446.55,242.93 L446.80,247.00 L447.05,251.07 L447.29,255.05 L447.54,258.86 L447.79,262.42 L448.03,265.67 L448.28,268.53 L448.52,270.99 L448.77,273.00 L449.02,270.99 L449.26,268.53 L449.51,265.67 L449.76,262.42 L450.00,258.86 L450.25,255.05 L450.50,251.07 L450.74,247.00 L450.99,242.93 L451.24,238.89 L451.48,234.94 L451.73,231.24 L451.97,227.86 L452.22,224.86 L452.47,222.26 L452.71,220.11 L452.96,222.26 L453.21,224.86 L453.45,227.86 L453.70,231.24 L453.95,234.94 L454.19,238.89 L454.44,242.93 L454.69,247.00 L454.93,251.07 L455.18,255.05 L455.42,258.86 L455.67,262.42 L455.92,265.67 L456.16,268.53 L456.41,270.99 L456.66,273.00 L456.90,270.99 L457.15,268.53 L457.40,265.67 L457.64,262.42 L457.89,258.86 L458.14,255.05 L458.38,251.07 L458.63,247.00 L458.88,242.93 L459.12,238.84 L459.37,234.75 L459.61,230.92 L459.86,227.40 L460.11,224.26 L460.35,221.53 L460.60,219.25 L460.85,221.53 L461.09,224.26 L461.34,227.40 L461.59,230.92 L461.83,234.75 L462.08,238.84 L462.32,242.93 L462.57,247.00 L462.82,251.07 L463.06,255.05 L463.31,258.86 L463.56,262.42 L463.80,265.67 L464.05,268.53 L464.30,270.99 L464.54,273.00 L464.79,270.99 L465.04,268.53 L465.28,265.67 L465.53,262.42 L465.77,258.86 L466.02,255.05 L466.27,251.07 L466.51,247.00 L466.76,242.93 L467.01,238.85 L467.25,234.81 L467.50,231.02 L467.75,227.54 L467.99,224.44 L468.24,221.75 L468.49,219.50 L468.73,221.75 L468.98,224.44 L469.22,227.54 L469.47,231.02 L469.72,234.81 L469.96,238.85 L470.21,242.93 L470.46,247.00 L470.70,251.07 L470.95,255.05 L471.20,258.86 L471.44,262.42 L471.69,265.67 L471.94,268.53 L472.18,270.99 L472.43,273.00 L472.67,270.99 L472.92,268.53 L473.17,265.67 L473.41,262.42 L473.66,258.86 L473.91,255.05 L474.15,251.07 L474.40,247.00 L474.65,242.93 L474.89,238.82 L475.14,234.71 L475.39,230.84 L475.63,227.29 L475.88,224.11 L476.12,221.35 L476.37,219.03 L476.62,221.35 L476.86,224.11 L477.11,227.29 L477.36,230.84 L477.60,234.71 L477.85,238.82 L478.10,242.93 L478.34,247.00 L478.59,251.07 L478.84,255.05 L479.08,258.86 L479.33,262.42 L479.57,265.67 L479.82,268.53 L480.07,270.99 L480.31,273.00 L480.56,270.99 L480.81,268.53 L481.05,265.67 L481.30,262.42 L481.55,258.86 L481.79,255.05 L482.04,251.07 L482.29,247.00 L482.53,242.93 L482.78,238.89 L483.02,234.95 L483.27,231.26 L483.52,227.88 L483.76,224.88 L484.01,222.30 L484.26,220.15 L484.50,222.30 L484.75,224.88 L485.00,227.88 L485.24,231.26 L485.49,234.95 L485.74,238.89 L485.98,242.93 L486.23,247.00 L486.47,251.07 L486.72,255.05 L486.97,258.86 L487.21,262.42 L487.46,265.67 L487.71,268.53 L487.95,270.99 L488.20,273.00 L488.45,270.99 L488.69,268.53 L488.94,265.67 L489.19,262.42 L489.43,258.86 L489.68,255.05 L489.92,251.07 L490.17,247.00 L490.42,242.93 L490.66,239.01 L490.91,235.34 L491.16,231.93 L491.40,228.83 L491.65,226.10 L491.90,223.80 L492.14,221.93 L492.39,223.80 L492.64,226.10 L492.88,228.83 L493.13,231.93 L493.37,235.34 L493.62,239.01 L493.87,242.93 L494.11,247.00 L494.36,251.07 L494.61,255.05 L494.85,258.86 L495.10,262.42 L495.35,265.67 L495.59,268.53 L495.84,270.99 L496.09,273.00 L496.33,270.99 L496.58,268.53 L496.82,265.67 L497.07,262.42 L497.32,258.86 L497.56,255.05 L497.81,251.07 L498.06,247.00 L498.30,242.93 L498.55,238.85 L498.80,234.81 L499.04,231.01 L499.29,227.53 L499.54,224.43 L499.78,221.74 L500.03,219.49 L500.27,221.74 L500.52,224.43 L500.77,227.53 L501.01,231.01 L501.26,234.81 L501.51,238.85 L501.75,242.93 L502.00,247.00 L502.25,251.07 L502.49,255.05 L502.74,258.86 L502.99,262.42 L503.23,265.67 L503.48,268.53 L503.72,270.99 L503.97,273.00 L504.22,270.99 L504.46,268.53 L504.71,265.67 L504.96,262.42 L505.20,258.86 L505.45,255.05 L505.70,251.07 L505.94,247.00 L506.19,242.93 L506.44,238.83 L506.68,234.73 L506.93,230.87 L507.17,227.34 L507.42,224.18 L507.67,221.43 L507.91,219.12 L508.16,221.43 L508.41,224.18 L508.65,227.34 L508.90,230.87 L509.15,234.73 L509.39,238.83 L509.64,242.93 L509.89,247.00 L510.13,251.07 L510.38,255.05 L510.62,258.86 L510.87,262.42 L511.12,265.67 L511.36,268.53 L511.61,270.99 L511.86,273.00 L512.10,270.99 L512.35,268.53 L512.60,265.67 L512.84,262.42 L513.09,258.86 L513.34,255.05 L513.58,251.07 L513.83,247.00 L514.07,242.93 L514.32,238.84 L514.57,234.77 L514.81,230.95 L515.06,227.45 L515.31,224.32 L515.55,221.61 L515.80,219.33 L516.03,221.61 L516.26,224.32 L516.49,227.45 L516.72,230.95 L516.96,234.77 L517.19,238.84 L517.42,242.93 L517.65,247.00 L517.88,251.07 L518.11,255.05 L518.34,258.86 L518.58,262.42 L518.81,265.67 L519.04,268.53 L519.27,270.99 L519.50,273.00 L519.73,270.99 L519.96,268.53 L520.19,265.67 L520.42,262.42 L520.66,258.86 L520.89,255.05 L521.12,251.07 L521.35,247.00 L521.58,242.93 L521.81,238.92 L522.04,235.03 L522.28,231.39 L522.51,228.07 L522.74,225.13 L522.97,222.60 L523.20,220.51 L523.43,222.60 L523.66,225.13 L523.90,228.07 L524.13,231.39 L524.36,235.03 L524.59,238.92 L524.82,242.93 L525.06,247.00 L525.29,251.07 L525.52,255.05 L525.75,258.86 L525.99,262.42 L526.22,265.67 L526.45,268.53 L526.68,270.99 L526.91,273.00 L527.15,270.99 L527.38,268.53 L527.61,265.67 L527.84,262.42 L528.07,258.86 L528.31,255.05 L528.54,251.07 L528.77,247.00 L529.00,242.93 L529.23,238.89 L529.47,234.92 L529.70,231.20 L529.93,227.80 L530.16,224.78 L530.39,222.17 L530.63,220.00 L530.86,222.17 L531.09,224.78 L531.32,227.80 L531.56,231.20 L531.79,234.92 L532.02,238.89 L532.25,242.93 L532.48,247.00 L532.72,251.07 L532.95,255.05 L533.18,258.86 L533.41,262.42 L533.64,265.67 L533.88,268.53 L534.11,270.99 L534.34,273.00 L534.57,270.99 L534.80,268.53 L535.04,265.67 L535.27,262.42 L535.50,258.86 L535.73,255.05 L535.96,251.07 L536.20,247.00 L536.43,242.93 L536.66,239.00 L536.89,235.30 L537.12,231.86 L537.36,228.74 L537.59,225.99 L537.82,223.65 L538.05,221.76 L538.29,223.65 L538.52,225.99 L538.75,228.74 L538.98,231.86 L539.21,235.30 L539.45,239.00 L539.68,242.93 L539.91,247.00 L540.14,251.07 L540.37,255.05 L540.61,258.86 L540.84,262.42 L541.07,265.67 L541.30,268.53 L541.53,270.99 L541.77,273.00 L542.00,270.99 L542.23,268.53 L542.46,265.67 L542.69,262.42 L542.93,258.86 L543.16,255.05 L543.39,251.07 L543.62,247.00 L543.86,242.93 L544.09,238.86 L544.32,234.83 L544.55,231.05 L544.78,227.58 L545.02,224.50 L545.25,221.82 L545.48,219.59 L545.71,221.82 L545.94,224.50 L546.18,227.58 L546.41,231.05 L546.64,234.83 L546.87,238.86 L547.10,242.93 L547.34,247.00 L547.57,251.07 L547.80,255.05 L548.03,258.86 L548.27,262.42 L548.50,265.67 L548.73,268.53 L548.96,270.99 L549.19,273.00 L549.43,270.99 L549.66,268.53 L549.89,265.67 L550.12,262.42 L550.35,258.86 L550.59,255.05 L550.82,251.07 L551.05,247.00 L551.28,242.93 L551.51,238.92 L551.75,235.03 L551.98,231.39 L552.21,228.06 L552.44,225.12 L552.67,222.58 L552.91,220.49 L553.14,222.58 L553.37,225.12 L553.60,228.06 L553.84,231.39 L554.07,235.03 L554.30,238.92 L554.53,242.93 L554.76,247.00 L555.00,251.07 L555.23,255.05 L555.46,258.86 L555.69,262.42 L555.92,265.67 L556.16,268.53 L556.39,270.99 L556.62,273.00 L556.85,270.99 L557.08,268.53 L557.32,265.67 L557.55,262.42 L557.78,258.86 L558.01,255.05 L558.24,251.07 L558.48,247.00 L558.71,242.93 L558.94,238.98 L559.17,235.25 L559.41,231.77 L559.64,228.60 L559.87,225.81 L560.10,223.44 L560.33,221.50 L560.57,223.44 L560.80,225.81 L561.03,228.60 L561.26,231.77 L561.49,235.25 L561.73,238.98 L561.96,242.93 L562.19,247.00 L562.42,251.07 L562.65,255.05 L562.89,258.86 L563.12,262.42 L563.35,265.67 L563.58,268.53 L563.81,270.99 L564.05,273.00 L564.28,270.99 L564.51,268.53 L564.74,265.67 L564.97,262.42 L565.21,258.86 L565.44,255.05 L565.67,251.07 L565.90,247.00 L566.14,242.93 L566.37,239.03 L566.60,235.42 L566.83,232.06 L567.06,229.01 L567.30,226.34 L567.53,224.09 L567.76,222.28 L567.99,224.09 L568.22,226.34 L568.46,229.01 L568.69,232.06 L568.92,235.42 L569.15,239.03 L569.38,242.93 L569.62,247.00 L569.85,251.07 L570.08,255.05 L570.31,258.86 L570.55,262.42 L570.78,265.67 L571.01,268.53 L571.24,270.99 L571.47,273.00 L571.71,270.99 L571.94,268.53 L572.17,265.67 L572.40,262.42 L572.63,258.86 L572.87,255.05 L573.10,251.07 L573.33,247.00 L573.56,242.93 L573.79,238.85 L574.03,234.81 L574.26,231.02 L574.49,227.54 L574.72,224.44 L574.95,221.76 L575.19,219.51 L575.42,221.76 L575.65,224.44 L575.88,227.54 L576.12,231.02 L576.35,234.81 L576.58,238.85 L576.81,242.93 L577.04,247.00 L577.28,251.07 L577.51,255.05 L577.74,258.86 L577.97,262.42 L578.20,265.67 L578.44,268.53 L578.67,270.99 L578.90,273.00 L579.13,270.99 L579.36,268.53 L579.60,265.67 L579.83,262.42 L580.06,258.86 L580.29,255.05 L580.52,251.07 L580.76,247.00 L580.99,242.93 L581.22,238.82 L581.45,234.71 L581.69,230.84 L581.92,227.29 L582.15,224.12 L582.38,221.35 L582.61,219.04 L582.85,221.35 L583.08,224.12 L583.31,227.29 L583.54,230.84 L583.77,234.71 L584.01,238.82 L584.24,242.93 L584.47,247.00 L584.70,251.07 L584.93,255.05 L585.17,258.86 L585.40,262.42 L585.63,265.67 L585.86,268.53 L586.09,270.99 L586.33,273.00 L586.56,270.99 L586.79,268.53 L587.02,265.67 L587.26,262.42 L587.49,258.86 L587.72,255.05 L587.95,251.07 L588.18,247.00 L588.42,242.93 L588.65,239.02 L588.88,235.40 L589.11,232.02 L589.34,228.97 L589.58,226.28 L589.81,224.02 L590.04,222.19 L590.27,224.02 L590.50,226.28 L590.74,228.97 L590.97,232.02 L591.20,235.40 L591.43,239.02 L591.66,242.93 L591.90,247.00 L592.13,251.07 L592.36,255.05 L592.59,258.86 L592.83,262.42 L593.06,265.67 L593.29,268.53 L593.52,270.99 L593.75,273.00 L593.99,270.99 L594.22,268.53 L594.45,265.67 L594.68,262.42 L594.91,258.86 L595.15,255.05 L595.38,251.07 L595.61,247.00 L595.84,242.93 L596.07,238.87 L596.31,234.85 L596.54,231.09 L596.77,227.64 L597.00,224.57 L597.23,221.91 L597.47,219.70 L597.70,221.91 L597.93,224.57 L598.16,227.64 L598.39,231.09 L598.63,234.85 L598.86,238.87 L599.09,242.93 L599.32,247.00 L599.56,251.07 L599.79,255.05 L600.02,258.86 L600.25,262.42 L600.48,265.67 L600.72,268.53 L600.95,270.99 L601.18,273.00 L601.41,270.99 L601.64,268.53 L601.88,265.67 L602.11,262.42 L602.34,258.86 L602.57,255.05 L602.80,251.07 L603.04,247.00 L603.27,242.93 L603.50,238.95 L603.73,235.15 L603.97,231.60 L604.20,228.37 L604.43,225.51 L604.66,223.07 L604.89,221.06 L605.13,223.07 L605.36,225.51 L605.59,228.37 L605.82,231.60 L606.05,235.15 L606.29,238.95 L606.52,242.93 L606.75,247.00 L606.98,251.07 L607.21,255.05 L607.45,258.86 L607.68,262.42 L607.91,265.67 L608.14,268.53 L608.37,270.99 L608.61,273.00 L608.84,270.99 L609.07,268.53 L609.30,265.67 L609.54,262.42 L609.77,258.86 L610.00,255.05 L610.23,251.07 L610.46,247.00 L610.70,242.93 L610.93,239.01 L611.16,235.35 L611.39,231.94 L611.62,228.85 L611.86,226.13 L612.09,223.83 L612.32,221.97 L612.55,223.83 L612.78,226.13 L613.02,228.85 L613.25,231.94 L613.48,235.35 L613.71,239.01 L613.94,242.93 L614.18,247.00 L614.41,251.07 L614.64,255.05 L614.87,258.86 L615.11,262.42 L615.34,265.67 L615.57,268.53 L615.80,270.99 L616.03,273.00 L616.27,270.99 L616.50,268.53 L616.73,265.67 L616.96,262.42 L617.19,258.86 L617.43,255.05 L617.66,251.07 L617.89,247.00 L618.12,242.93 L618.35,238.98 L618.59,235.24 L618.82,231.75 L619.05,228.58 L619.28,225.79 L619.51,223.41 L619.75,221.47 L619.98,223.41 L620.21,225.79 L620.44,228.58 L620.67,231.75 L620.91,235.24 L621.14,238.98 L621.37,242.93 L621.60,247.00 L621.84,251.07 L622.07,255.05 L622.30,258.86 L622.53,262.42 L622.76,265.67 L623.00,268.53 L623.23,270.99 L623.46,273.00 L623.69,270.99 L623.92,268.53 L624.16,265.67 L624.39,262.42 L624.62,258.86 L624.85,255.05 L625.08,251.07 L625.32,247.00 L625.55,242.93 L625.78,238.87 L626.01,234.88 L626.25,231.13 L626.48,227.70 L626.71,224.65 L626.94,222.01 L627.17,219.81 L627.41,222.01 L627.64,224.65 L627.87,227.70 L628.10,231.13 L628.33,234.88 L628.57,238.87 L628.80,242.93 L629.03,247.00 L629.26,251.07 L629.49,255.05 L629.73,258.86 L629.96,262.42 L630.19,265.67 L630.42,268.53 L630.65,270.99 L630.89,273.00 L631.12,270.99 L631.35,268.53 L631.58,265.67 L631.82,262.42 L632.05,258.86 L632.28,255.05 L632.51,251.07 L632.74,247.00 L632.98,242.93 L633.21,238.85 L633.44,234.80 L633.67,230.99 L633.90,227.51 L634.14,224.40 L634.37,221.70 L634.60,219.45 L634.82,221.70 L635.04,224.40 L635.27,227.51 L635.49,230.99 L635.71,234.80 L635.93,238.85 L636.15,242.93 L636.38,247.00 L636.60,251.07 L636.82,255.05 L637.04,258.86 L637.26,262.42 L637.48,265.67 L637.71,268.53 L637.93,270.99 L638.15,273.00 L638.37,270.99 L638.59,268.53 L638.82,265.67 L639.04,262.42 L639.26,258.86 L639.48,255.05 L639.70,251.07 L639.93,247.00 L640.15,242.93 L640.37,239.03 L640.59,235.43 L640.81,232.08 L641.03,229.05 L641.26,226.39 L641.48,224.15 L641.70,222.35 L641.94,224.15 L642.19,226.39 L642.43,229.05 L642.68,232.08 L642.92,235.43 L643.17,239.03 L643.41,242.93 L643.66,247.00 L643.90,251.07 L644.15,255.05 L644.39,258.86 L644.64,262.42 L644.88,265.67 L645.12,268.53 L645.37,270.99 L645.61,273.00 L645.86,270.99 L646.10,268.53 L646.35,265.67 L646.59,262.42 L646.84,258.86 L647.08,255.05 L647.33,251.07 L647.57,247.00 L647.82,242.93 L648.06,238.91 L648.30,234.99 L648.55,231.33 L648.79,227.99 L649.04,225.02 L649.28,222.46 L649.53,220.35 L649.77,222.46 L650.02,225.02 L650.26,227.99 L650.51,231.33 L650.75,234.99 L650.99,238.91 L651.24,242.93 L651.48,247.00 L651.73,251.07 L651.97,255.05 L652.22,258.86 L652.46,262.42 L652.71,265.67 L652.95,268.53 L653.20,270.99 L653.44,273.00 L653.69,270.99 L653.93,268.53 L654.17,265.67 L654.42,262.42 L654.66,258.86 L654.91,255.05 L655.15,251.07 L655.40,247.00 L655.64,242.93 L655.89,239.03 L656.13,235.43 L656.38,232.08 L656.62,229.05 L656.87,226.39 L657.11,224.15 L657.35,222.34 L657.60,224.15 L657.84,226.39 L658.09,229.05 L658.33,232.08 L658.58,235.43 L658.82,239.03 L659.07,242.93 L659.31,247.00 L659.56,251.07 L659.80,255.05 L660.05,258.86 L660.29,262.42 L660.53,265.67 L660.78,268.53 L661.02,270.99 L661.27,273.00 L661.51,270.99 L661.76,268.53 L662.00,265.67 L662.25,262.42 L662.49,258.86 L662.74,255.05 L662.98,251.07 L663.23,247.00 L663.47,242.93 L663.71,238.88 L663.96,234.92 L664.20,231.20 L664.45,227.80 L664.69,224.77 L664.94,222.16 L665.18,219.99 L665.43,222.16 L665.67,224.77 L665.92,227.80 L666.16,231.20 L666.40,234.92 L666.65,238.88 L666.89,242.93 L667.14,247.00 L667.38,251.07 L667.63,255.05 L667.87,258.86 L668.12,262.42 L668.36,265.67 L668.61,268.53 L668.85,270.99 L669.10,273.00 L669.34,270.99 L669.58,268.53 L669.83,265.67 L670.07,262.42 L670.32,258.86 L670.56,255.05 L670.81,251.07 L671.05,247.00 L671.30,242.93 L671.54,238.97 L671.79,235.21 L672.03,231.70 L672.28,228.52 L672.52,225.70 L672.76,223.30 L673.01,221.34 L673.25,223.30 L673.50,225.70 L673.74,228.52 L673.99,231.70 L674.23,235.21 L674.48,238.97 L674.72,242.93 L674.97,247.00 L675.21,251.07 L675.46,255.05 L675.70,258.86 L675.94,262.42 L676.19,265.67 L676.43,268.53 L676.68,270.99 L676.92,273.00 L677.17,270.99 L677.41,268.53 L677.66,265.67 L677.90,262.42 L678.15,258.86 L678.39,255.05 L678.63,251.07 L678.88,247.00 L679.12,242.93 L679.37,238.85 L679.61,234.79 L679.86,230.98 L680.10,227.49 L680.35,224.38 L680.59,221.68 L680.84,219.42 L681.08,221.68 L681.33,224.38 L681.57,227.49 L681.81,230.98 L682.06,234.79 L682.30,238.85 L682.55,242.93 L682.79,247.00 L683.04,251.07 L683.28,255.05 L683.53,258.86 L683.77,262.42 L684.02,265.67 L684.26,268.53 L684.51,270.99 L684.75,273.00 L684.99,270.99 L685.24,268.53 L685.48,265.67 L685.73,262.42 L685.97,258.86 L686.22,255.05 L686.46,251.07 L686.71,247.00 L686.95,242.93 L687.20,238.83 L687.44,234.71 L687.69,230.85 L687.93,227.31 L688.17,224.14 L688.42,221.38 L688.66,219.07 L688.91,221.38 L689.15,224.14 L689.40,227.31 L689.64,230.85 L689.89,234.71 L690.13,238.83 L690.38,242.93 L690.62,247.00 L690.87,251.07 L691.11,255.05 L691.35,258.86 L691.60,262.42 L691.84,265.67 L692.09,268.53 L692.33,270.99 L692.58,273.00 L692.82,270.99 L693.07,268.53 L693.31,265.67 L693.56,262.42 L693.80,258.86 L694.04,255.05 L694.29,251.07 L694.53,247.00 L694.78,242.93 L695.02,238.93 L695.27,235.08 L695.51,231.48 L695.76,228.19 L696.00,225.28 L696.25,222.79 L696.49,220.73 L696.74,222.79 L696.98,225.28 L697.22,228.19 L697.47,231.48 L697.71,235.08 L697.96,238.93 L698.20,242.93 L698.45,247.00 L698.69,251.07 L698.94,255.05 L699.18,258.86 L699.43,262.42 L699.67,265.67 L699.92,268.53 L700.16,270.99 L700.40,273.00 L700.65,270.99 L700.89,268.53 L701.14,265.67 L701.38,262.42 L701.63,258.86 L701.87,255.05 L702.12,251.07 L702.36,247.00 L702.61,242.93 L702.85,238.82 L703.10,234.70 L703.34,230.83 L703.58,227.27 L703.83,224.09 L704.07,221.33 L704.32,219.01 L704.56,221.33 L704.81,224.09 L705.05,227.27 L705.30,230.83 L705.54,234.70 L705.79,238.82 L706.03,242.93 L706.27,247.00 L706.52,251.07 L706.76,255.05 L707.01,258.86 L707.25,262.42 L707.50,265.67 L707.74,268.53 L707.99,270.99 L708.23,273.00 L708.48,270.99 L708.72,268.53 L708.97,265.67 L709.21,262.42 L709.45,258.86 L709.70,255.05 L709.94,251.07 L710.19,247.00 L710.43,242.93 L710.68,238.97 L710.92,235.23 L711.17,231.73 L711.41,228.56 L711.66,225.75 L711.90,223.36 L712.15,221.42 L712.39,223.36 L712.63,225.75 L712.88,228.56 L713.12,231.73 L713.37,235.23 L713.61,238.97 L713.86,242.93 L714.10,247.00 L714.35,251.07 L714.59,255.05 L714.84,258.86 L715.08,262.42 L715.33,265.67 L715.57,268.53 L715.81,270.99 L716.06,273.00 L716.30,270.99 L716.55,268.53 L716.79,265.67 L717.04,262.42 L717.28,258.86 L717.53,255.05 L717.77,251.07 L718.02,247.00 L718.26,242.93 L718.51,239.02 L718.75,235.41 L718.99,232.04 L719.24,228.99 L719.48,226.31 L719.73,224.05 L719.97,222.23 L720.22,224.05 L720.46,226.31 L720.71,228.99 L720.95,232.04 L721.20,235.41 L721.44,239.02 L721.68,242.93 L721.93,247.00 L722.17,251.07 L722.42,255.05 L722.66,258.86 L722.91,262.42 L723.15,265.67 L723.40,268.53 L723.64,270.99 L723.89,273.00 L724.13,270.99 L724.38,268.53 L724.62,265.67 L724.86,262.42 L725.11,258.86 L725.35,255.05 L725.60,251.07 L725.84,247.00 L726.09,242.93 L726.33,238.91 L726.58,235.01 L726.82,231.35 L727.07,228.02 L727.31,225.05 L727.56,222.51 L727.80,220.40 L728.04,222.51 L728.27,225.05 L728.51,228.02 L728.75,231.35 L728.99,235.01 L729.22,238.91 L729.46,242.93 L729.70,247.00 L729.94,251.07 L730.17,255.05 L730.41,258.86 L730.65,262.42 L730.89,265.67 L731.12,268.53 L731.36,270.99 L731.60,272.00 L731.84,271.45 L732.07,269.81 L732.31,267.15 L732.55,263.56 L732.79,259.20 L733.02,254.22 L733.26,248.82 L733.50,243.20 L733.74,237.58 L733.97,232.18 L734.21,227.20 L734.45,222.84 L734.69,219.25 L734.92,216.59 L735.16,214.95 L735.40,214.40 L736.35,220.00 L737.39,230.80 L738.43,236.50 L739.95,240.50 L742.03,244.30 L744.49,246.70 L746.39,248.00 L747.81,249.80 L749.23,253.00 L750.46,258.40 L751.51,266.00 L752.17,275.00 L752.64,280.50 L753.21,276.00 L753.97,262.00 L754.92,244.00 L755.96,228.00 L757.00,221.00 L757.00,221.00 L757.22,223.01 L757.44,225.47 L757.67,228.33 L757.89,231.58 L758.11,235.14 L758.33,238.95 L758.55,242.93 L758.77,247.00 L759.00,251.07 L759.22,255.05 L759.44,258.86 L759.66,262.42 L759.88,265.67 L760.11,268.53 L760.33,270.99 L760.55,273.00 L760.77,270.99 L760.99,268.53 L761.22,265.67 L761.44,262.42 L761.66,258.86 L761.88,255.05 L762.10,251.07 L762.33,247.00 L762.55,242.93 L762.77,239.03 L762.99,235.44 L763.21,232.10 L763.43,229.07 L763.66,226.42 L763.88,224.19 L764.10,222.39 L764.32,224.19 L764.54,226.42 L764.77,229.07 L764.99,232.10 L765.21,235.44 L765.43,239.03 L765.65,242.93 L765.88,247.00 L766.10,251.07 L766.32,255.05 L766.54,258.86 L766.76,262.42 L766.98,265.67 L767.21,268.53 L767.43,270.99 L767.65,273.00 L767.87,270.99 L768.09,268.53 L768.32,265.67 L768.54,262.42 L768.76,258.86 L768.98,255.05 L769.20,251.07 L769.43,247.00 L769.65,242.93 L769.87,239.00 L770.09,235.31 L770.31,231.88 L770.53,228.76 L770.76,226.02 L770.98,223.70 L771.20,221.81 L771.42,223.70 L771.64,226.02 L771.87,228.76 L772.09,231.88 L772.31,235.31 L772.53,239.00 L772.75,242.93 L772.98,247.00 L773.20,251.07 L773.42,255.05 L773.64,258.86 L773.86,262.42 L774.08,265.67 L774.31,268.53 L774.53,270.99 L774.75,273.00 L774.97,270.99 L775.19,268.53 L775.42,265.67 L775.64,262.42 L775.86,258.86 L776.08,255.05 L776.30,251.07 L776.52,247.00 L776.75,242.93 L776.97,238.95 L777.19,235.15 L777.41,231.60 L777.63,228.37 L777.86,225.52 L778.08,223.07 L778.30,221.07 L778.52,223.07 L778.74,225.52 L778.97,228.37 L779.19,231.60 L779.41,235.15 L779.63,238.95 L779.85,242.93 L780.07,247.00 L780.30,251.07 L780.52,255.05 L780.74,258.86 L780.96,262.42 L781.18,265.67 L781.41,268.53 L781.63,270.99 L781.85,273.00 L782.07,270.99 L782.29,268.53 L782.52,265.67 L782.74,262.42 L782.96,258.86 L783.18,255.05 L783.40,251.07 L783.62,247.00 L783.85,242.93 L784.07,238.91 L784.29,235.00 L784.51,231.34 L784.73,228.00 L784.96,225.03 L785.18,222.48 L785.40,220.36 L785.62,222.48 L785.84,225.03 L786.07,228.00 L786.29,231.34 L786.51,235.00 L786.73,238.91 L786.95,242.93 L787.17,247.00 L787.40,251.07 L787.62,255.05 L787.84,258.86 L788.06,262.42 L788.28,265.67 L788.51,268.53 L788.73,270.99 L788.95,273.00 L789.17,270.99 L789.39,268.53 L789.62,265.67 L789.84,262.42 L790.06,258.86 L790.28,255.05 L790.50,251.07 L790.73,247.00 L790.95,242.93 L791.17,239.01 L791.39,235.35 L791.61,231.93 L791.83,228.84 L792.06,226.12 L792.28,223.82 L792.50,221.95 L792.73,223.82 L792.95,226.12 L793.18,228.84 L793.41,231.93 L793.63,235.35 L793.86,239.01 L794.09,242.93 L794.31,247.00 L794.54,251.07 L794.77,255.05 L794.99,258.86 L795.22,262.42 L795.45,265.67 L795.67,268.53 L795.90,270.99" fill="none" stroke="#262626" stroke-width="1.15"/>
  <path d="M39,498 H48.3 V378.3 Q48.3,376 50.3,376 L52.0,376.22 L55.6,376.37 L58.9,376.32 L63.4,376.11 L68.4,376.10 L73.1,376.11 L76.5,376.27 L82.8,376.13 L86.7,376.36 L93.5,376.33 L98.1,376.51 L101.2,376.46 L105.4,376.14 L108.9,376.22 L115.1,376.16 L120.5,376.36 L125.0,376.32 L128.2,376.11 L132.0,376.38 L136.7,376.22 L142.1,376.28 L146.3,376.43 L152.1,376.19 L157.4,376.31 L163.9,376.40 L168.0,376.51 L171.5,376.26 L177.5,376.15 L182.5,376.40 L188.2,376.72 L193.5,376.77 L197.7,376.69 L203.1,376.64 L207.9,376.75 L214.7,376.59 L220.3,376.41 L226.2,376.66 L233.1,376.74 L237.3,376.55 L242.9,376.39 L247.8,376.45 L251.3,376.41 L257.3,376.44 L261.3,376.55 L267.8,376.42 L272.6,376.62 L279.1,376.74 L285.6,376.50 L290.2,376.54 L296.8,376.80 L300.4,376.46 L304.3,376.48 L309.3,376.64 L313.3,376.38 L318.0,376.54 L323.2,376.80 L329.0,376.61 L334.5,376.68 L337.7,376.78 L343.8,376.76 L350.0,376.55 L354.6,376.43 L360.1,376.41 L363.4,376.47 L367.1,376.53 L370.3,376.38 L373.9,376.42 L378.3,376.39 L384.8,376.65 L388.4,376.49 L392.8,376.54 L396.3,376.75 L403.3,376.59 L408.2,376.42 L411.6,376.53 L415.7,376.74 L419.3,376.39 L426.1,376.31 L429.7,376.32 L432.8,376.31 L439.7,376.46 L445.5,376.19 L450.0,376.15 L456.1,376.31 L462.2,376.23 L466.1,376.44 L473.0,376.46 L479.2,376.44 L485.2,376.18 L490.3,376.24 L493.4,376.09 L497.5,376.19 L503.3,376.50 L508.1,376.49 L516.3,375.8 V497.9 H800" fill="none" stroke="#444" stroke-width="1.25"/>
  <path d="M516.3,497.9 H800" fill="none" stroke="#2a2a2a" stroke-width="1.3"/>

  <!-- labels panel 1 -->
  <g font-family="Liberation Sans" fill="#4a4a4a">
    <text x="42.9" y="105.6" font-size="14">+20V</text>
    <text x="254.5" y="104.9" font-size="13">CKPS</text>
    <text x="451.9" y="105.9" font-size="14">Cur a: 2.3 V</text>
    <text x="551.3" y="105.9" font-size="14">Avg</text>
    <text x="584.5" y="105.9" font-size="14">: 2.4 V</text>
    <text x="652" y="105.9" font-size="14">Cur b: 2.3 V</text>
    <text x="42.9" y="306.9" font-size="14">-5V</text>
    <text x="146.6" y="310.8" font-size="12.5" fill="#333" stroke="#333" stroke-width="0.3">a</text>
    <text x="559" y="311" font-size="13">b</text>

    <text x="42.9" y="333.8" font-size="14">+20V</text>
    <text x="254.5" y="333.8" font-size="13">CMPS</text>
    <text x="452.8" y="333.8" font-size="14">Cur a: 13.6 V</text>
    <text x="551.5" y="333.8" font-size="14">Avg</text>
    <text x="584.5" y="333.8" font-size="14">: 11.8 V</text>
    <text x="651.8" y="333.8" font-size="14">Cur b: 0.1 V</text>
    <text x="42.9" y="537" font-size="14">-5V</text>
  </g>
  <!-- checkboxes -->
  <rect x="748.8" y="97.8" width="13.4" height="12.8" fill="#fbfbfd" stroke="#7282a2" stroke-width="1.6"/>
  <rect x="771.6" y="95.8" width="20.8" height="19.6" fill="#fff" stroke="#000" stroke-width="2"/>
  <rect x="775" y="99.2" width="14" height="12.8" fill="#000"/>
  <rect x="748.8" y="325.8" width="13.4" height="12.8" fill="#fbfbfd" stroke="#7282a2" stroke-width="1.6"/>
  <rect x="771.6" y="323.8" width="20.8" height="19.6" fill="#fff" stroke="#000" stroke-width="2"/>
  <rect x="775" y="327.2" width="14" height="12.8" fill="#000"/>

  <!-- bottom scroll bar -->
  <rect x="148" y="548.8" width="621" height="17.5" fill="url(#dots)"/>
  <rect x="29" y="548.8" width="9" height="17.5" fill="url(#dots)"/>
  <rect x="13.5" y="549" width="15.2" height="16.5" fill="#d6d2ca"/>
  <path d="M13.5,565.5 H28.7 V549" stroke="#555" stroke-width="1.2" fill="none"/>
  <path d="M13.5,565 V549.2 H28" stroke="#fff" stroke-width="1" fill="none"/>
  <path d="M19,557.3 L23.2,553.8 L23.2,560.8 Z" fill="#000"/>
  <rect x="768.7" y="549.4" width="31.3" height="16.1" fill="#d6d2ca"/>
  <path d="M768.7,565.5 H800 V549.4" stroke="#555" stroke-width="1.2" fill="none"/>
  <path d="M784.2,549.4 V565.5" stroke="#555" stroke-width="1.3"/>
  <path d="M769.2,565 V549.9 H783.5 M785.3,565 V549.9 H799.3" stroke="#f6f5f2" stroke-width="1" fill="none"/>
  <path d="M790.4,553.4 L794.5,556.8 L790.4,560.2 Z" fill="#000"/>
  <rect x="39.2" y="545.5" width="106.6" height="20.6" fill="#fff" stroke="#2b2bf0" stroke-width="2"/>
  <text x="44" y="560.6" font-size="15.4" font-family="Liberation Sans" fill="#151515">CKPS, CMPS</text>
</svg>
</body></html>
